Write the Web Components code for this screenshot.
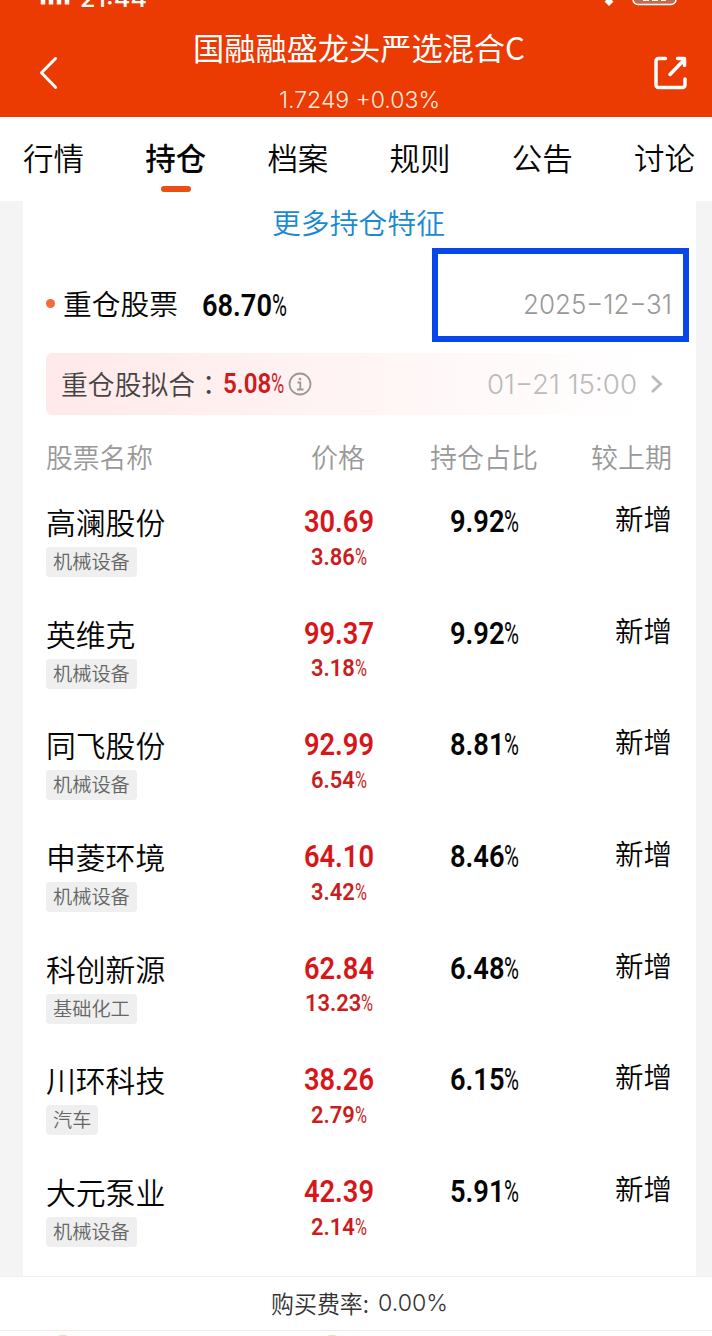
<!DOCTYPE html>
<html lang="zh-CN">
<head>
<meta charset="UTF-8">
<title>国融融盛龙头严选混合C</title>
<style>
    body {
        margin: 0;
        background: #f4f4f4;
        font-family: "Noto Sans CJK SC", sans-serif;
        font-weight: 350;
        color: #050505;
    }
</style>
</head>
<body>
<fund-page></fund-page>

<script>
// Text squeezed or stretched to a set width: <fit-text w="120">
class FitText extends HTMLElement {
    connectedCallback() {
        this.attachShadow({ mode: 'open' });
        this.shadowRoot.innerHTML = `
            <style>
                :host { display: inline-block; white-space: nowrap; flex: none; }
                span { display: inline-block; transform-origin: 0 50%; }
            </style>
            <span><slot></slot></span>
        `;
        const w = parseFloat(this.getAttribute('w'));
        const span = this.shadowRoot.querySelector('span');
        const natural = span.getBoundingClientRect().width;
        this.style.width = w + 'px';
        span.style.transform = `scaleX(${w / natural})`;
    }
}

// Condensed figure with a lighter percent sign
class DinNumber extends HTMLElement {
    connectedCallback() {
        const value = this.getAttribute('value');
        const size = parseFloat(this.getAttribute('size') || 30);
        const digits = value.replace('%', '');
        const count = digits.replace('.', '').length;
        const w = (count * 0.505 + 0.275) * size;
        this.attachShadow({ mode: 'open' });
        this.shadowRoot.innerHTML = `
            <style>
                :host {
                    display: inline-flex;
                    font-family: Roboto, sans-serif;
                    font-weight: 600;
                    font-size: ${size}px;
                    line-height: 1.2;
                }
                .pct { font-weight: 400; }
            </style>
            <fit-text w="${w}">${digits}</fit-text>
            ${value.includes('%') ? `<fit-text class="pct" w="${size * 0.49}">%</fit-text>` : ''}
        `;
    }
}

class StatusBar extends HTMLElement {
    connectedCallback() {
        this.attachShadow({ mode: 'open' });
        this.shadowRoot.innerHTML = `
            <style>
                :host { display: flex; height: 10px; overflow: hidden; align-items: flex-end; padding: 0 34px 0 40px; color: #fff; }
                svg { display: block; }
                .time { font: 500 24px/24px Inter, sans-serif; height: 24px; margin: 0 auto 1px 10px; align-self: flex-end; }
                .time fit-text { position: relative; top: 2px; }
            </style>
            <svg width="30" height="10"><path d="M3 0v4.500M11 0v4.500M19 0v4.500M27 0v4.500" stroke="#fff" stroke-width="4.500"/></svg>
            <div class="time"><fit-text w="67">21:44</fit-text></div>
            <svg width="78" height="10">
                <path d="M4.500 1.500L9 -2l4.500 3.500L9 6z" fill="#fff"/>
                <rect x="33" y="-14" width="43" height="18.500" rx="5" fill="#c8684c" stroke="#fff" stroke-width="1.500"/>
                <path d="M43 0h6M52 0h6M61 0h5" stroke="#fff" stroke-width="2"/>
            </svg>
        `;
    }
}

class FundHeader extends HTMLElement {
    connectedCallback() {
        this.attachShadow({ mode: 'open' });
        this.shadowRoot.innerHTML = `
            <style>
                :host { display: block; height: 117px; background: #eb3a02; color: #fff; }
                .bar { display: grid; grid-template-columns: 80px 1fr 80px; height: 107px; }
                .back { padding: 46px 0 0 38px; }
                .share { padding: 44px 0 0 20px; }
                .mid { display: flex; flex-direction: column; align-items: center; padding: 16px 0 0 6px; }
                h1 { margin: 0; font-size: 30.800px; font-weight: 400; line-height: 42px; }
                p { margin: 16px 0 0; font: 300 22.500px/32px Inter, sans-serif; color: #ffe9df; }
            </style>
            <status-bar></status-bar>
            <div class="bar">
                <div class="back">
                    <svg width="22" height="34" viewBox="0 0 22 34" fill="none" stroke="#fff" stroke-width="3" stroke-linecap="round" stroke-linejoin="round"><path d="M17.500 2.500L3.500 16.800l14 14.500"/></svg>
                </div>
                <div class="mid">
                    <h1><fit-text w="332">国融融盛龙头严选混合C</fit-text></h1>
                    <p><fit-text w="161">1.7249 +0.03%</fit-text></p>
                </div>
                <div class="share">
                    <svg width="36" height="36" viewBox="0 0 36 36" fill="none" stroke="#fff" stroke-width="3.500" stroke-linecap="round" stroke-linejoin="round"><path d="M13.500 4.500H6.500a2.500 2.500 0 0 0-2.500 2.500v24a2.500 2.500 0 0 0 2.500 2.500h24a2.500 2.500 0 0 0 2.500-2.500v-6M18 20.500L31 7M25.500 4.500h7v7"/></svg>
                </div>
            </div>
        `;
    }
}

class FundTabs extends HTMLElement {
    connectedCallback() {
        const tabs = ['行情', '持仓', '档案', '规则', '公告', '讨论'];
        this.attachShadow({ mode: 'open' });
        this.shadowRoot.innerHTML = `
            <style>
                :host { display: flex; justify-content: space-between; box-sizing: border-box; height: 84px; padding: 18px 17px 0 23px; background: #fff; }
                .tab { display: flex; flex-direction: column; align-items: center; font-size: 30.500px; line-height: 44px; }
                .tab.on { font-weight: 500; }
                .tab.on::after { content: ""; width: 30px; height: 6px; margin-top: 7px; border-radius: 3px; background: #e94e12; }
            </style>
            ${tabs.map((t, i) => `<div class="tab${i === 1 ? ' on' : ''}"><fit-text w="61">${t}</fit-text></div>`).join('')}
        `;
    }
}

class HoldingsSummary extends HTMLElement {
    connectedCallback() {
        this.attachShadow({ mode: 'open' });
        this.shadowRoot.innerHTML = `
            <style>
                :host { display: block; }
                .more { height: 47px; text-align: center; color: #198ad0; font-size: 28.800px; line-height: 42px; margin-left: -2px; }
                .head { display: flex; align-items: center; box-sizing: border-box; height: 94px; margin-right: 7px; padding-left: 23px; }
                .dot { width: 9px; height: 9px; border-radius: 50%; background: #f26b3a; margin: 17px 8px 0 0; }
                .title { font-size: 28.800px; line-height: 40px; margin-top: 16px; }
                din-number { margin: 22px 0 0 24px; }
                .date { box-sizing: border-box; width: 257px; height: 94px; margin-left: auto; border: 6px solid #0746e8; padding: 34px 11px 0 0; text-align: right; font: 300 27px/34px Inter, sans-serif; color: #999; }
                .fit { display: flex; align-items: center; height: 62px; margin: 11px 23px 0; padding: 0 9px 0 15px; border-radius: 6px; background: linear-gradient(90deg, #ffe9e9, #fff 96%); font-size: 26.800px; color: #444; }
                .fit .label { position: relative; top: -1px; }
                .colon { font-family: "Noto Sans CJK TC", sans-serif; }
                .fit din-number { color: #d01a1c; margin: 0 0 0 1px; }
                .fit .info { margin-left: 3px; }
                .fit .time { margin: 0 13px 0 auto; font: 300 26.500px/34px Inter, sans-serif; color: #bbb; }
            </style>
            <div class="more"><fit-text w="173">更多持仓特征</fit-text></div>
            <div class="head">
                <i class="dot"></i>
                <fit-text class="title" w="115">重仓股票</fit-text>
                <din-number value="68.70%" size="30.500"></din-number>
                <div class="date"><fit-text w="149">2025−12−31</fit-text></div>
            </div>
            <div class="fit">
                <fit-text class="label" w="161">重仓股拟合<span class="colon" lang="zh-TW">：</span></fit-text>
                <din-number value="5.08%" size="27"></din-number>
                <svg class="info" width="24" height="24" viewBox="0 0 24 24" fill="none" stroke="#999" stroke-width="1.800"><circle cx="12" cy="12" r="10.500"/><path d="M9.500 10.500H12.300v7M9 17.500h6.500"/><circle cx="12" cy="7" r="1.300" fill="#999" stroke="none"/></svg>
                <fit-text class="time" w="150">01−21 15:00</fit-text>
                <svg width="14" height="22" viewBox="0 0 14 22" fill="none" stroke="#bbb" stroke-width="2.800"><path d="M2 3l8.500 8L2 19"/></svg>
            </div>
        `;
    }
}

class StockRow extends HTMLElement {
    connectedCallback() {
        const get = (n) => this.getAttribute(n);
        const name = get('name');
        const tag = get('tag');
        this.attachShadow({ mode: 'open' });
        this.shadowRoot.innerHTML = `
            <style>
                :host { display: grid; grid-template-columns: 230px 126px 165px 105px; height: 111.700px; }
                .name { font-size: 29.700px; line-height: 44px; padding: 5px 0 1px; }
                .tag { display: inline-flex; align-items: center; box-sizing: border-box; height: 30px; margin-top: 2px; padding: 0 7px 2px; border-radius: 4px; background: #efefef; color: #666; font-size: 19px; line-height: 28px; }
                .price { display: flex; flex-direction: column; align-items: center; color: #d8161a; padding-top: 9px; }
                .price .chg { margin-top: 1px; color: #c91d20; }
                .ratio { text-align: center; padding-top: 9px; }
                .diff { text-align: right; font-size: 28.500px; line-height: 40px; padding-top: 3px; }
            </style>
            <div>
                <div class="name"><fit-text w="${name.length * 29.800}">${name}</fit-text></div>
                <div class="tag"><fit-text w="${tag.length * 19.200}">${tag}</fit-text></div>
            </div>
            <div class="price">
                <din-number value="${get('price')}" size="30.500"></din-number>
                <din-number class="chg" value="${get('change')}" size="24.500"></din-number>
            </div>
            <div class="ratio"><din-number value="${get('ratio')}" size="30.500"></din-number></div>
            <div class="diff"><fit-text w="57">新增</fit-text></div>
        `;
    }
}

class StockTable extends HTMLElement {
    connectedCallback() {
        const rows = [
            ['高澜股份', '机械设备', '30.69', '3.86%', '9.92%'],
            ['英维克', '机械设备', '99.37', '3.18%', '9.92%'],
            ['同飞股份', '机械设备', '92.99', '6.54%', '8.81%'],
            ['申菱环境', '机械设备', '64.10', '3.42%', '8.46%'],
            ['科创新源', '基础化工', '62.84', '13.23%', '6.48%'],
            ['川环科技', '汽车', '38.26', '2.79%', '6.15%'],
            ['大元泵业', '机械设备', '42.39', '2.14%', '5.91%']
        ];
        this.attachShadow({ mode: 'open' });
        this.shadowRoot.innerHTML = `
            <style>
                :host { display: block; padding: 22px 23px 0; }
                .cols { display: grid; grid-template-columns: 229px 126px 165px 105px; height: 58px; font-size: 26.800px; line-height: 40px; color: #999; text-align: center; }
                .cols :first-child { text-align: left; }
                .cols :last-child { text-align: right; }
            </style>
            <div class="cols">
                <div><fit-text w="107">股票名称</fit-text></div>
                <div><fit-text w="54">价格</fit-text></div>
                <div><fit-text w="108">持仓占比</fit-text></div>
                <div><fit-text w="81">较上期</fit-text></div>
            </div>
            ${rows.map((r) => `<stock-row name="${r[0]}" tag="${r[1]}" price="${r[2]}" change="${r[3]}" ratio="${r[4]}"></stock-row>`).join('')}
        `;
    }
}

class FeeFooter extends HTMLElement {
    connectedCallback() {
        this.attachShadow({ mode: 'open' });
        this.shadowRoot.innerHTML = `
            <style>
                :host { display: block; height: 60px; background: #fff; color: #333; }
                .fee { display: flex; justify-content: center; align-items: center; gap: 9px; box-sizing: border-box; height: 55px; padding: 0 0 2px 7px; border-top: 1px solid #f0f0f0; border-bottom: 1px solid #ececec; font-size: 24px; }
                .rate { font: 300 23px/30px Inter, sans-serif; }
                svg { display: block; }
            </style>
            <div class="fee"><fit-text w="98">购买费率:</fit-text><fit-text class="rate" w="70">0.00%</fit-text></div>
            <svg width="712" height="5" fill="none" stroke="#efe0c0" stroke-width="1.500"><circle cx="63" cy="14.500" r="10"/><circle cx="332" cy="14.500" r="10"/></svg>
        `;
    }
}

class FundPage extends HTMLElement {
    connectedCallback() {
        this.attachShadow({ mode: 'open' });
        this.shadowRoot.innerHTML = `
            <style>
                :host { display: flex; flex-direction: column; width: 712px; height: 1336px; overflow: hidden; }
                main { flex: 1; min-height: 0; overflow: hidden; margin: 0 16px 0 23px; background: #fff; }
            </style>
            <fund-header></fund-header>
            <fund-tabs></fund-tabs>
            <main>
                <holdings-summary></holdings-summary>
                <stock-table></stock-table>
            </main>
            <fee-footer></fee-footer>
        `;
    }
}

customElements.define('fit-text', FitText);
customElements.define('din-number', DinNumber);
customElements.define('status-bar', StatusBar);
customElements.define('fund-header', FundHeader);
customElements.define('fund-tabs', FundTabs);
customElements.define('holdings-summary', HoldingsSummary);
customElements.define('stock-row', StockRow);
customElements.define('stock-table', StockTable);
customElements.define('fee-footer', FeeFooter);
customElements.define('fund-page', FundPage);
</script>
</body>
</html>
